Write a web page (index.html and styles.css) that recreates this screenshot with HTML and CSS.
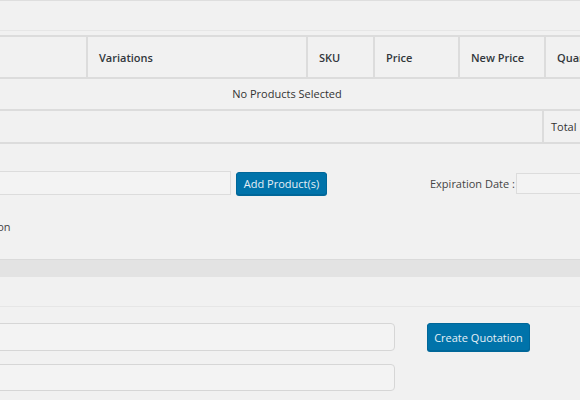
FILE: index.html
```html
<!DOCTYPE html>
<html>
<head>
<meta charset="utf-8">
<link rel="stylesheet" href="styles.css">
</head>
<body>
<div class="top"></div>
<div class="table">
  <div class="thead">
    <div class="th"></div>
    <div class="th">Variations</div>
    <div class="th">SKU</div>
    <div class="th">Price</div>
    <div class="th">New Price</div>
    <div class="th last">Quantity</div>
  </div>
  <div class="row-empty">No Products Selected</div>
  <div class="row-total">
    <div class="cell-span"></div>
    <div class="cell-total">Total</div>
  </div>
</div>
<div class="form-row">
  <input class="search" type="text">
  <button class="btn btn-add">Add Product(s)</button>
  <label class="exp-label">Expiration Date :</label>
  <input class="exp-input" type="text">
</div>
<div class="option-line">Send Quotation</div>
<div class="gray-bar"></div>
<div class="spacer"></div>
<div class="bottom">
  <div class="inputs">
    <input class="field" type="text">
    <input class="field field2" type="text">
  </div>
  <button class="btn btn-create">Create Quotation</button>
</div>
</body>
</html>
```
FILE: styles.css
```css
html, body {
  margin: 0;
  padding: 0;
  background: #f1f1f1;
  font-family: "Open Sans", "DejaVu Sans", sans-serif;
  font-size: 11px;
  color: #444;
  overflow: hidden;
}
.top {
  height: 29px;
  border-top: 1px solid #dedede;
  border-bottom: 1px solid #e6e6e6;
  margin-bottom: 4px;
}
.table {
  margin-left: -58px;
  width: 694px;
  border-top: 2px solid #dcdcdc;
}
.thead {
  display: grid;
  grid-template-columns: 146px 220px 67px 85px 86px 90px;
  height: 40px;
  border-bottom: 2px solid #dcdcdc;
}
.th {
  border-right: 2px solid #dcdcdc;
  padding-left: 11px;
  display: flex;
  align-items: center;
  font-weight: 600;
  color: #32373c;
  white-space: nowrap;
}
.th.last { border-right: none; }
.row-empty {
  height: 28px;
  padding-bottom: 2px;
  border-bottom: 2px solid #dcdcdc;
  display: flex;
  align-items: center;
  justify-content: center;
  color: #333;
  padding-right: 4px;
}
.row-total {
  display: flex;
  height: 31px;
  border-bottom: 2px solid #dcdcdc;
}
.cell-span {
  width: 600px;
  border-right: 2px solid #dcdcdc;
}
.cell-total {
  padding-left: 7px;
  display: flex;
  align-items: center;
  color: #333;
}
.form-row {
  display: flex;
  align-items: center;
  padding-top: 27px;
  height: 24px;
  white-space: nowrap;
}
.form-row > * { flex-shrink: 0; }
.search {
  margin: 0 0 0 -100px;
  width: 331px;
  height: 24px;
  box-sizing: border-box;
  border: 1px solid #dcdcdc;
  background: #f3f3f3;
  padding: 0;
}
.btn {
  background: #0073aa;
  border: 1px solid #006799;
  box-shadow: 0 1px 0 #006799;
  color: #e6f0f6;
  font-family: "Open Sans", "DejaVu Sans", sans-serif;
  font-size: 11px;
  border-radius: 3px;
  padding: 0;
  box-sizing: border-box;
  white-space: nowrap;
}
.btn-add {
  margin-left: 5px;
  width: 91px;
  height: 23px;
}
.exp-label {
  margin-left: 103px;
  color: #444;
}
.exp-input {
  margin: 0 0 0 1px;
  width: 80px;
  height: 21px;
  box-sizing: border-box;
  border: 1px solid #dcdcdc;
  background: #f3f3f3;
  padding: 0;
}
.option-line {
  margin-top: 23px;
  margin-left: -70px;
  height: 18px;
  line-height: 18px;
}
.gray-bar {
  margin-top: 23px;
  height: 17px;
  background: #e3e3e3;
  border-top: 1px solid #dadada;
}
.spacer {
  height: 29px;
  border-bottom: 1px solid #e6e6e6;
}
.bottom {
  display: flex;
  align-items: flex-start;
  padding-top: 16px;
}
.inputs {
  display: flex;
  flex-direction: column;
  gap: 13px;
  margin-left: -100px;
  flex-shrink: 0;
}
.field {
  width: 495px;
  height: 28px;
  box-sizing: border-box;
  border: 1px solid #d6d6d6;
  border-radius: 4px;
  background: #f3f3f3;
  margin: 0;
  padding: 0;
}
.field2 { height: 27px; }
.btn-create {
  margin-left: 32px;
  width: 103px;
  height: 28px;
  flex-shrink: 0;
}
```
